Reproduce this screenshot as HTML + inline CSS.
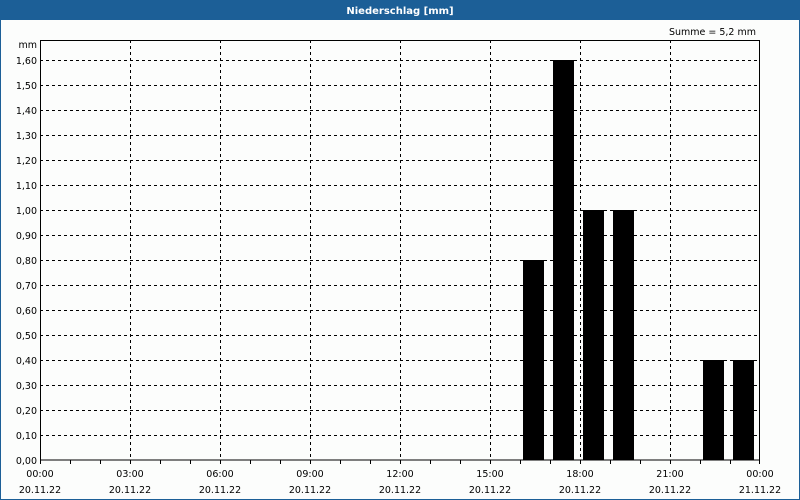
<!DOCTYPE html>
<html><head><meta charset="utf-8"><style>
html,body{margin:0;padding:0;width:800px;height:500px;overflow:hidden;background:#fcfdfc}
svg{display:block}
text{font-family:"DejaVu Sans","Liberation Sans",sans-serif;font-size:9.5px;fill:#000}
</style></head><body>
<svg width="800" height="500" viewBox="0 0 800 500" xmlns="http://www.w3.org/2000/svg">
<rect x="0" y="0" width="800" height="500" fill="#fcfdfc"/>
<rect x="0.5" y="0.5" width="799" height="499" fill="none" stroke="#1c5f97"/>
<rect x="0" y="0" width="800" height="20" fill="#1c5f97"/>
<text x="400" y="14" text-anchor="middle" style="fill:#fff;font-weight:bold;font-size:10px">Niederschlag [mm]</text>
<text x="756" y="35" text-anchor="end">Summe = 5,2 mm</text>
<text x="37" y="48" text-anchor="end">mm</text>
<g stroke="#000" stroke-width="1" stroke-dasharray="3,3" fill="none">
<path d="M40 60.5H760M40 85.5H760M40 110.5H760M40 135.5H760M40 160.5H760M40 185.5H760M40 210.5H760M40 235.5H760M40 260.5H760M40 285.5H760M40 310.5H760M40 335.5H760M40 360.5H760M40 385.5H760M40 410.5H760M40 435.5H760"/>
<path d="M130.5 40V460M220.5 40V460M310.5 40V460M400.5 40V460M490.5 40V460M580.5 40V460M670.5 40V460"/>
</g>
<g fill="#000">
<rect x="523" y="260" width="21" height="200"/>
<rect x="553" y="60" width="21" height="400"/>
<rect x="583" y="210" width="21" height="250"/>
<rect x="613" y="210" width="21" height="250"/>
<rect x="703" y="360" width="21" height="100"/>
<rect x="733" y="360" width="21" height="100"/>
</g>
<rect x="40.5" y="40.5" width="719" height="419.5" fill="none" stroke="#000"/>
<path d="M40.5 460v4M70.5 460v4M100.5 460v4M130.5 460v4M160.5 460v4M190.5 460v4M220.5 460v4M250.5 460v4M280.5 460v4M310.5 460v4M340.5 460v4M370.5 460v4M400.5 460v4M430.5 460v4M460.5 460v4M490.5 460v4M520.5 460v4M550.5 460v4M580.5 460v4M610.5 460v4M640.5 460v4M670.5 460v4M700.5 460v4M730.5 460v4M759.5 460v4" stroke="#000"/>
<g text-anchor="end">
<text x="37" y="64">1,60</text><text x="37" y="89">1,50</text><text x="37" y="114">1,40</text><text x="37" y="139">1,30</text><text x="37" y="164">1,20</text><text x="37" y="189">1,10</text><text x="37" y="214">1,00</text><text x="37" y="239">0,90</text><text x="37" y="264">0,80</text><text x="37" y="289">0,70</text><text x="37" y="314">0,60</text><text x="37" y="339">0,50</text><text x="37" y="364">0,40</text><text x="37" y="389">0,30</text><text x="37" y="414">0,20</text><text x="37" y="439">0,10</text><text x="37" y="464">0,00</text>
</g>
<g text-anchor="middle">
<text x="40" y="477">00:00</text><text x="40" y="493">20.11.22</text>
<text x="130" y="477">03:00</text><text x="130" y="493">20.11.22</text>
<text x="220" y="477">06:00</text><text x="220" y="493">20.11.22</text>
<text x="310" y="477">09:00</text><text x="310" y="493">20.11.22</text>
<text x="400" y="477">12:00</text><text x="400" y="493">20.11.22</text>
<text x="490" y="477">15:00</text><text x="490" y="493">20.11.22</text>
<text x="580" y="477">18:00</text><text x="580" y="493">20.11.22</text>
<text x="670" y="477">21:00</text><text x="670" y="493">20.11.22</text>
<text x="760" y="477">00:00</text><text x="760" y="493">21.11.22</text>
</g>
</svg>
</body></html>
